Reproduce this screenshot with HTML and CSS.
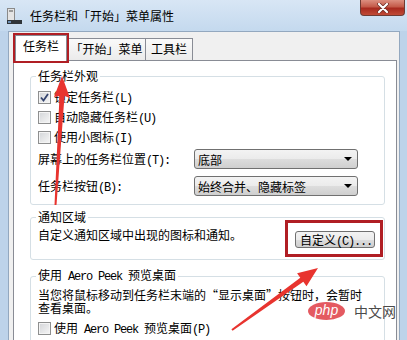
FILE: index.html
```html
<!DOCTYPE html>
<html lang="zh-CN">
<head>
    <meta charset="UTF-8">
    <title>任务栏和「开始」菜单属性</title>
    <link rel="stylesheet" href="styles.css">
</head>
<body>
    <div class="window">
        <div class="titlebar">
            <svg class="app-icon" width="15" height="16" viewBox="0 0 15 16">
                <rect x="0.5" y="0.5" width="7" height="12" fill="#e4e4e4" stroke="#8a8a8a"/>
                <rect x="2" y="2" width="4" height="2" fill="#9a9a9a"/>
                <rect x="0" y="12" width="15" height="4" fill="#2f3438"/>
                <rect x="1" y="13" width="3" height="2" fill="#6d8fb3"/>
            </svg>
            <span class="title">任务栏和「开始」菜单属性</span>
            <div class="close">
                <svg width="14" height="10" viewBox="0 0 14 10">
                    <path d="M3 1 L11 9 M11 1 L3 9" stroke="#6b2a22" stroke-width="3.6" stroke-linecap="round"/>
                    <path d="M3 1 L11 9 M11 1 L3 9" stroke="#fff" stroke-width="2.2" stroke-linecap="round"/>
                </svg>
            </div>
        </div>

        <div class="client">
            <div class="tabs">
                <div class="tab active">任务栏</div>
                <div class="tab tab-start">「开始」菜单</div>
                <div class="tab tab-tools">工具栏</div>
            </div>

            <div class="panel">
                <fieldset class="group group-look">
                    <legend>任务栏外观</legend>
                    <div class="check-row">
                        <span class="box checked">
                            <svg width="11" height="11" viewBox="0 0 11 11"><path d="M2 5.5 L4.5 8.5 L9 2" fill="none" stroke="#34446e" stroke-width="1.8"/></svg>
                        </span>
                        <span>锁定任务栏<span class="lat">(L)</span></span>
                    </div>
                    <div class="check-row">
                        <span class="box"></span>
                        <span>自动隐藏任务栏<span class="lat">(U)</span></span>
                    </div>
                    <div class="check-row">
                        <span class="box"></span>
                        <span>使用小图标<span class="lat">(I)</span></span>
                    </div>
                    <div class="field-row">
                        <span>屏幕上的任务栏位置<span class="lat">(T):</span></span>
                        <div class="combo"><span>底部</span><i class="caret"></i></div>
                    </div>
                    <div class="field-row second">
                        <span>任务栏按钮<span class="lat">(B):</span></span>
                        <div class="combo"><span>始终合并、隐藏标签</span><i class="caret"></i></div>
                    </div>
                </fieldset>

                <fieldset class="group group-notify">
                    <legend>通知区域</legend>
                    <div class="notify-row">
                        <span>自定义通知区域中出现的图标和通知。</span>
                        <button class="btn">自定义<span class="lat">(C)...</span></button>
                    </div>
                </fieldset>

                <fieldset class="group group-peek">
                    <legend>使用<span class="lat"> Aero Peek </span>预览桌面</legend>
                    <div class="desc">
                        <span class="desc-line">当您将鼠标移动到任务栏末端的“显示桌面”按钮时，会暂时</span>
                        <span class="desc-line">查看桌面。</span>
                    </div>
                    <div class="check-row">
                        <span class="box"></span>
                        <span>使用<span class="lat"> Aero Peek </span>预览桌面<span class="lat">(P)</span></span>
                    </div>
                </fieldset>
            </div>
        </div>
    </div>

    <!-- annotations drawn over the screenshot -->
    <svg class="marks" width="407" height="340" viewBox="0 0 407 340">
        <rect x="14.5" y="34.5" width="53" height="27" fill="none" stroke="#b01e24" stroke-width="3"/>
        <rect x="286.5" y="221.5" width="95" height="34" fill="none" stroke="#b01e24" stroke-width="3"/>
        <polygon points="62,76 70,98 64.5,96 56.5,205 54.5,205 59.5,96 54,97" fill="#e8342f"/>
        <polygon points="318,268 306.5,286.2 303.3,281.7 232.6,330.8 231.4,329.2 300.3,277.7 297.1,273.2" fill="#e8342f"/>
    </svg>

    <div class="watermark">
        <span class="php">php</span>
        <span class="cn">中文网</span>
    </div>
</body>
</html>
```

FILE: styles.css
```css
* {
    margin: 0;
    padding: 0;
    box-sizing: border-box;
}

body {
    width: 407px;
    height: 340px;
    overflow: hidden;
    position: relative;
    background: #bdd3ea;
    font-family: "Noto Sans CJK SC", sans-serif;
    font-size: 12px;
    color: #000;
}

.lat {
    font-family: "Liberation Mono", monospace;
    letter-spacing: -1.2px;
}

.window {
    display: flex;
    flex-direction: column;
    height: 340px;
}

.titlebar {
    height: 31px;
    flex-shrink: 0;
    display: flex;
    align-items: flex-start;
    padding-left: 7px;
    background: linear-gradient(#d8e6f5, #c4d9ee);
}

.app-icon {
    margin-top: 8px;
}

.title {
    margin-left: 8px;
    margin-top: 8px;
    line-height: 16px;
}

.close {
    margin-left: auto;
    margin-right: 2px;
    width: 45px;
    height: 16px;
    display: flex;
    align-items: center;
    justify-content: center;
    border: 1px solid #6e3b33;
    border-top: none;
    border-radius: 0 0 4px 4px;
    background: linear-gradient(#dc8f80 0%, #c45a49 45%, #a82a1f 55%, #c04a36 100%);
}

.client {
    flex: 1;
    display: flex;
    flex-direction: column;
    margin: 0 7px 0 8px;
    padding: 3px 2px 0 4px;
    background: #f0f0f0;
    border: 1px solid #93a8bf;
    border-bottom: none;
    overflow: hidden;
}

.tabs {
    display: flex;
    align-items: flex-end;
    height: 25px;
    padding-left: 2px;
}

.tab {
    height: 22px;
    padding-top: 1px;
    line-height: 17px;
    text-align: center;
    border: 1px solid #898c95;
    border-bottom: none;
    background: linear-gradient(#fafafa, #ebebeb);
}

.tab.active {
    width: 52px;
    height: 26px;
    padding-top: 0;
    line-height: 20px;
    margin-bottom: -1px;
    background: #fff;
    position: relative;
    z-index: 1;
}

.tab-start {
    width: 79px;
}

.tab-tools {
    width: 48px;
    margin-left: -1px;
}

.panel {
    flex: 1;
    background: #fff;
    border: 1px solid #898c95;
    border-bottom: none;
    padding: 8px 11px 0 16px;
    overflow: hidden;
}

.group {
    border: 1px solid #d5dfe5;
    border-radius: 3px;
    padding: 4px 9px 8px 7px;
}

.group legend {
    padding: 0 2px;
    margin-left: -2px;
    line-height: 14px;
}

.group-notify {
    margin-top: 5px;
    padding-bottom: 11px;
}

.group-peek {
    margin-top: 8px;
}

.check-row {
    height: 20px;
    display: flex;
    align-items: center;
}

.box {
    width: 13px;
    height: 13px;
    margin-right: 3px;
    display: flex;
    align-items: center;
    justify-content: center;
    border: 1px solid #8e8f8f;
    background: linear-gradient(135deg, #d3d5d8, #f6f6f6);
    box-shadow: inset 0 0 0 1px #f4f4f4;
}

.field-row {
    display: grid;
    grid-template-columns: 156px 164px;
    align-items: center;
    height: 20px;
    margin-top: 2px;
}

.field-row.second {
    margin-top: 7px;
}

.combo {
    height: 20px;
    display: flex;
    align-items: center;
    justify-content: space-between;
    padding: 0 5px 0 3px;
    border: 1px solid #707070;
    border-radius: 3px;
    background: linear-gradient(#f3f3f3 0%, #ebebeb 50%, #dddddd 51%, #cfcfcf 100%);
}

.caret {
    width: 0;
    height: 0;
    border-left: 4px solid transparent;
    border-right: 4px solid transparent;
    border-top: 4px solid #000;
}

.notify-row {
    display: flex;
    justify-content: space-between;
    align-items: flex-start;
    line-height: 14px;
}

.btn {
    width: 80px;
    height: 17px;
    margin-top: 3px;
    padding-left: 4px;
    text-align: left;
    font-family: inherit;
    font-size: 12px;
    line-height: 15px;
    color: #000;
    border: 1px solid #707070;
    border-radius: 3px;
    background: linear-gradient(#f3f3f3 0%, #ebebeb 50%, #dddddd 51%, #cfcfcf 100%);
}

.desc {
    display: flex;
    flex-direction: column;
    margin-bottom: 4px;
}

.desc-line {
    height: 13px;
    line-height: 13px;
    white-space: nowrap;
}

.marks {
    position: absolute;
    left: 0;
    top: 0;
    pointer-events: none;
}

.watermark {
    position: absolute;
    left: 308px;
    top: 302px;
    display: flex;
    align-items: center;
}

.php {
    width: 37px;
    height: 18px;
    border-radius: 50%;
    background: #e45a61;
    color: #fff;
    font-family: "Liberation Sans", sans-serif;
    font-style: italic;
    font-size: 14px;
    line-height: 17px;
    text-align: center;
}

.cn {
    margin-left: 9px;
    font-size: 14px;
    line-height: 18px;
    color: #4a4a4a;
}
```
